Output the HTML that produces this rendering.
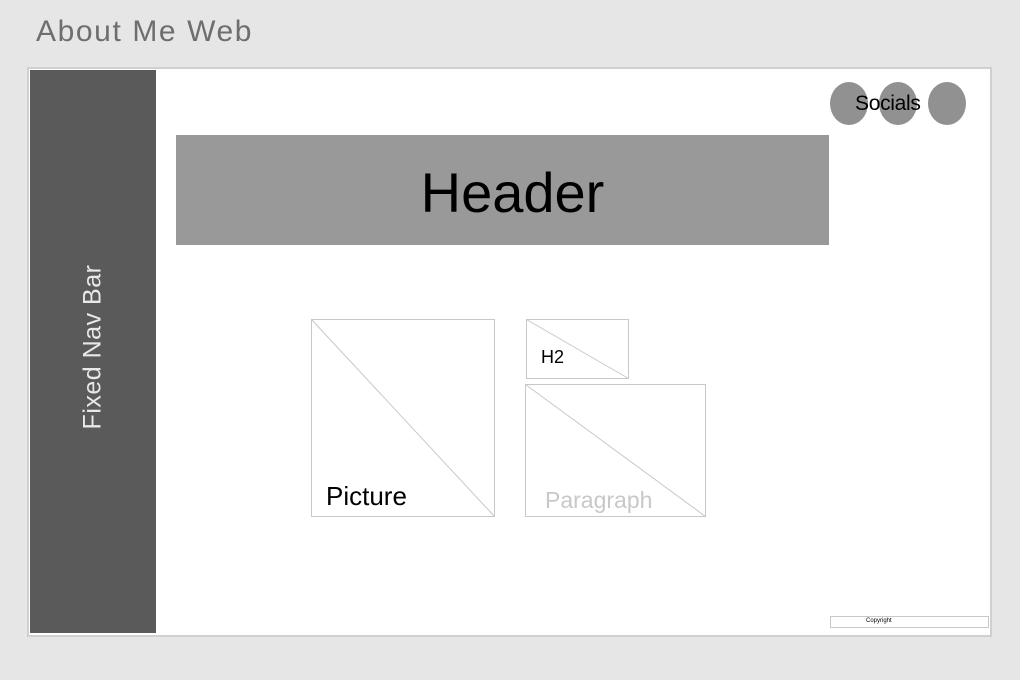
<!DOCTYPE html><html><head><style>
body{margin:0;width:1020px;height:680px;background:#e6e6e6;position:relative;overflow:hidden;font-family:"Liberation Sans",sans-serif}
.a{position:absolute}
</style></head><body>
<div class="a" style="left:36px;top:15px;font-size:30px;color:#6e6e6e;letter-spacing:1.6px">About Me Web</div>
<div class="a" style="left:27px;top:67px;width:961px;height:566px;border:2px solid #d0d0d0;background:#fff"></div>
<div class="a" style="left:30px;top:70px;width:126px;height:563px;background:#5b5a5a"></div>
<div class="a" style="left:93px;top:347px;transform:translate(-50%,-50%) rotate(-90deg);font-size:25px;color:#e8e8e8;white-space:nowrap;letter-spacing:0.5px">Fixed Nav Bar</div>
<div class="a" style="left:830px;top:82px;width:38px;height:43px;border-radius:50%;background:#919191"></div>
<div class="a" style="left:879px;top:82px;width:38px;height:43px;border-radius:50%;background:#919191"></div>
<div class="a" style="left:928px;top:82px;width:38px;height:43px;border-radius:50%;background:#919191"></div>
<div class="a" style="left:855px;top:92px;font-size:21px;color:#000;letter-spacing:-0.3px">Socials</div>
<div class="a" style="left:176px;top:135px;width:653px;height:110px;background:#999"></div>
<div class="a" style="left:186px;top:160px;width:653px;text-align:center;font-size:56px;color:#000">Header</div>
<svg class="a" style="left:0;top:0" width="1020" height="680">
<g fill="none" stroke="#c8c8c8" stroke-width="1">
<rect x="311.5" y="319.5" width="183" height="197"/><line x1="311.5" y1="319.5" x2="494.5" y2="516.5"/>
<rect x="526.5" y="319.5" width="102" height="59"/><line x1="526.5" y1="319.5" x2="628.5" y2="378.5"/>
<rect x="525.5" y="384.5" width="180" height="132"/><line x1="525.5" y1="384.5" x2="705.5" y2="516.5"/>
<rect x="830.5" y="616.5" width="158" height="11"/>
</g></svg>
<div class="a" style="left:326px;top:481px;font-size:26px;color:#000">Picture</div>
<div class="a" style="left:541px;top:347px;font-size:18px;color:#000">H2</div>
<div class="a" style="left:545px;top:487px;font-size:23px;color:#c8c8c8">Paragraph</div>
<div class="a" style="left:866px;top:618px;font-size:6px;color:#000">Copyright</div>
</body></html>
